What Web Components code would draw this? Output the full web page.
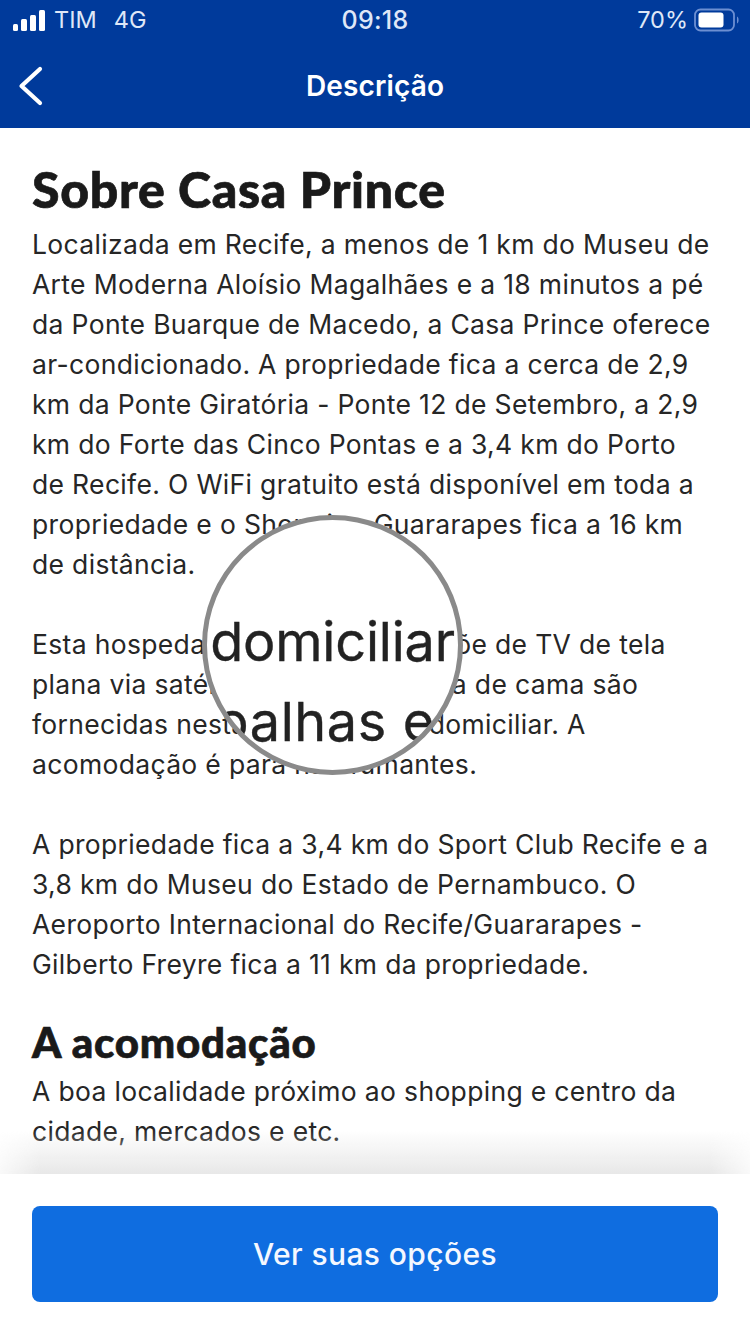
<!DOCTYPE html>
<html lang="pt"><head><meta charset="utf-8"><style>
html,body{margin:0;padding:0;background:#fff}
body{width:750px;height:1334px;overflow:hidden;font-family:Inter,"Liberation Sans",sans-serif}
</style></head><body>
<app-page>
<status-bar slot="top"></status-bar>
<nav-bar slot="top" title="Descrição"></nav-bar>
<text-block slot="main" heading="Sobre Casa Prince" level="1">
<span>Localizada em Recife, a menos de 1 km do Museu de</span><span>Arte Moderna Aloísio Magalhães e a 18 minutos a pé</span><span>da Ponte Buarque de Macedo, a Casa Prince oferece</span><span>ar-condicionado. A propriedade fica a cerca de 2,9</span><span>km da Ponte Giratória - Ponte 12 de Setembro, a 2,9</span><span>km do Forte das Cinco Pontas e a 3,4 km do Porto</span><span>de Recife. O WiFi gratuito está disponível em toda a</span><span>propriedade e o Shopping Guararapes fica a 16 km</span><span>de distância.</span>
<span class="gap"></span>
<span>Esta hospedagem domiciliar dispõe de TV de tela</span><span>plana via satélite. Toalhas e roupa de cama são</span><span>fornecidas nesta hospedagem domiciliar. A</span><span>acomodação é para não fumantes.</span>
<span class="gap"></span>
<span>A propriedade fica a 3,4 km do Sport Club Recife e a</span><span>3,8 km do Museu do Estado de Pernambuco. O</span><span>Aeroporto Internacional do Recife/Guararapes -</span><span>Gilberto Freyre fica a 11 km da propriedade.</span>
</text-block>
<text-block slot="main" heading="A acomodação" level="2">
<span>A boa localidade próximo ao shopping e centro da</span><span>cidade, mercados e etc.</span>
</text-block>
<magnifier-lens slot="over"></magnifier-lens>
<action-bar slot="bottom" label="Ver suas opções"></action-bar>
</app-page>
<script>
function def(name,html,init){
  customElements.define(name,class extends HTMLElement{
    constructor(){super();const r=this.attachShadow({mode:'open'});r.innerHTML=html;}
    connectedCallback(){if(init)init(this,this.shadowRoot);}
  });
}
def('app-page',`<style>
:host{display:flex;flex-direction:column;width:750px;height:1334px;overflow:hidden;background:#fff;position:relative}
.main{flex:1;min-height:0;overflow:hidden;position:relative;padding:33px 32px 0;box-sizing:border-box;display:flex;flex-direction:column;gap:36px}
.fade{position:absolute;left:0;right:0;bottom:0;height:44px;pointer-events:none;
 background:linear-gradient(to bottom,rgba(228,228,228,0),rgba(228,228,228,.85));
 -webkit-mask-image:linear-gradient(to right,rgba(0,0,0,.25) 0,#000 40px,#000 710px,rgba(0,0,0,.25) 750px);mask-image:linear-gradient(to right,rgba(0,0,0,.25) 0,#000 40px,#000 710px,rgba(0,0,0,.25) 750px)}
</style><slot name="top"></slot><div class="main"><slot name="main"></slot><slot name="over"></slot><div class="fade"></div></div><slot name="bottom"></slot>`);
def('status-bar',`<style>
:host{display:flex;align-items:flex-start;justify-content:space-between;height:44px;background:#003a9b;color:#dfe7f7;font:400 23.5px/28px Inter,"Liberation Sans",sans-serif;padding:6px 10px 0 13px;position:relative;box-sizing:border-box}
.l,.r{display:flex;align-items:center;height:28px}
.t{position:absolute;left:0;right:0;text-align:center;font-weight:500;font-size:25px;top:6px;line-height:28px;letter-spacing:.3px}
.bars{display:flex;align-items:flex-end;gap:3px;height:21px;margin-right:9px}
.bars i{display:block;width:6px;background:#fff;border-radius:1.5px}
.bars i:first-child{width:5px}
.g{margin-left:17px}
svg{display:block;margin-left:6px}
</style><div class="l"><div class="bars"><i style="height:7px"></i><i style="height:12px"></i><i style="height:16px"></i><i style="height:21px"></i></div><span>TIM</span><span class="g">4G</span></div>
<div class="t">09:18</div>
<div class="r"><span>70%</span><svg width="46" height="24" viewBox="0 0 46 24"><rect x="1" y="1.500" width="39" height="21" rx="5.500" fill="none" stroke="#6d8fd2" stroke-width="1.800"/><rect x="4.500" y="4.500" width="25" height="15" rx="3" fill="#fff"/><path d="M43 8.500v7c1-.4 1.600-1.900 1.600-3.500S44 8.900 43 8.500z" fill="#6d8fd2"/></svg></div>`);
def('nav-bar',`<style>
:host{display:flex;align-items:center;justify-content:center;height:84px;background:#003a9b;color:#fff;position:relative;box-sizing:border-box}
h1{margin:0;font:600 28px/1 Inter,"Liberation Sans",sans-serif;margin-top:-1px;letter-spacing:.15px}
svg{position:absolute;left:15px;top:21px}
</style><svg width="28" height="42" viewBox="0 0 28 42"><path d="M25 4 6.500 21 25 38" fill="none" stroke="#fff" stroke-width="4.200" stroke-linecap="round" stroke-linejoin="round"/></svg><h1></h1>`,
(h,r)=>{r.querySelector('h1').textContent=h.getAttribute('title')});
def('text-block',`<style>
:host{display:block;color:#262626;font:400 26.5px/40px Inter,"Liberation Sans",sans-serif;letter-spacing:.33px}
h2{margin:0;font-family:Lato,"Liberation Sans",sans-serif;font-weight:900;color:#1a1a1a;-webkit-text-stroke:.7px #1a1a1a}
h2.l1{font-size:50px;line-height:56px;margin-bottom:7px;letter-spacing:.7px}
h2.l2{font-size:42px;line-height:44px;margin-bottom:7px;letter-spacing:.8px}
::slotted(span){display:block;white-space:nowrap}
::slotted(span.gap){height:40px}
</style><h2></h2><slot></slot>`,
(h,r)=>{const e=r.querySelector('h2');e.textContent=h.getAttribute('heading');e.className='l'+h.getAttribute('level')});
def('magnifier-lens',`<style>
:host{display:block;position:absolute;left:202px;top:387px;width:261px;height:260px;box-sizing:border-box;border-radius:50%;border:5px solid #8a8a8a;background:#fff;overflow:hidden;color:#222;font:400 54px/1 Inter,"Liberation Sans",sans-serif;-webkit-text-stroke:.4px #222}
div{position:absolute;left:0;right:0;text-align:center;white-space:nowrap}
.a{top:95px;letter-spacing:-.2px}
.b{top:175px;letter-spacing:.6px;padding-right:14px;box-sizing:border-box}
</style><div class="a">domiciliar</div><div class="b">oalhas e</div>`);
def('action-bar',`<style>
:host{display:block;background:#fff;padding:32px;height:160px;box-sizing:border-box;flex:none}
button{display:flex;align-items:center;justify-content:center;width:100%;height:96px;border:0;border-radius:8px;background:#0f6de0;color:#f4f8ff;font:500 30px Inter,"Liberation Sans",sans-serif;letter-spacing:.4px;padding:0}
</style><button></button>`,
(h,r)=>{r.querySelector('button').textContent=h.getAttribute('label')});
</script></body></html>
